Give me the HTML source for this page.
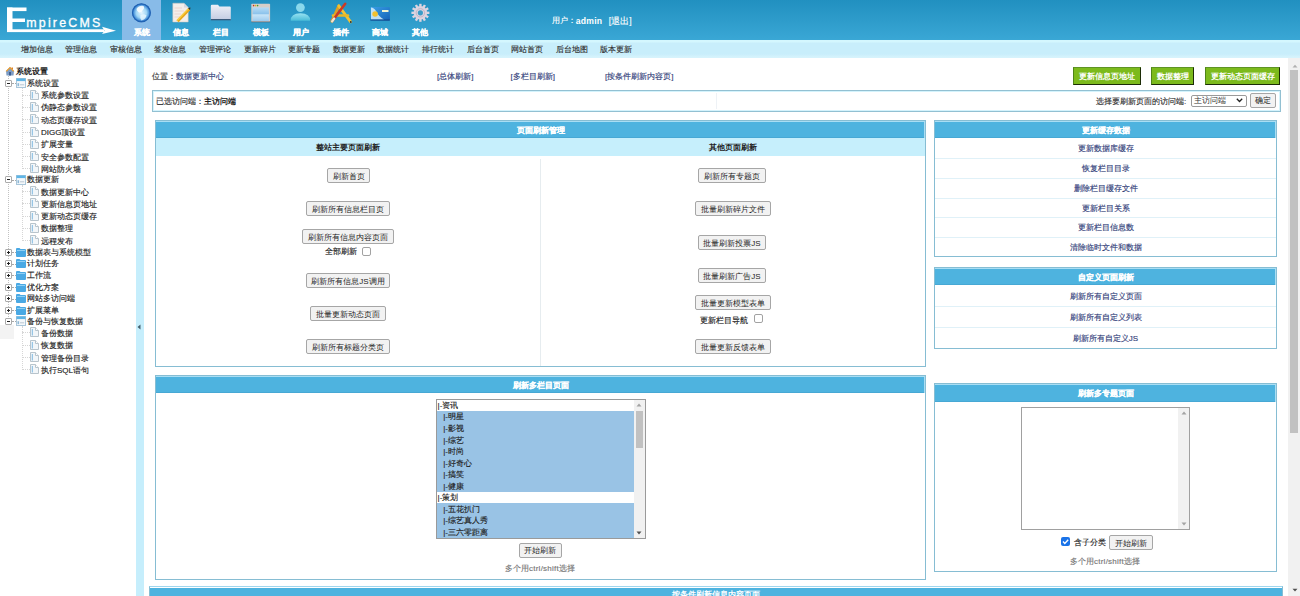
<!DOCTYPE html><html><head><meta charset="utf-8"><style>
*{margin:0;padding:0;box-sizing:border-box}
html,body{width:1300px;height:596px;overflow:hidden;background:#fff;font-family:"Liberation Sans",sans-serif;font-size:8px;color:#222}
.ab{position:absolute}
.t{position:absolute;white-space:nowrap;line-height:12px;-webkit-text-stroke:0.15px currentColor}
.c{text-align:center}
.t b,.b0{-webkit-text-stroke:0}
</style></head><body>

<div class="ab" style="left:0;top:0;width:1300px;height:40px;background:linear-gradient(#2190c0,#3aa7d5)"></div>
<svg class="ab" style="left:0;top:0" width="120" height="40" viewBox="0 0 120 40">
<g fill="#fff">
<rect x="7" y="7.5" width="5.5" height="24.5"/>
<rect x="7" y="7.5" width="19.5" height="3.6"/>
<rect x="7" y="18.5" width="18" height="3.5"/>
<rect x="7" y="29.3" width="97" height="2.8"/>
<path d="M102 26.8 L116 30.7 L102 34 L104.5 30.7 Z"/>
</g>
<text x="26.3" y="26.8" fill="#fff" stroke="#fff" stroke-width="0.3" font-family="Liberation Sans" font-size="12.4" letter-spacing="2.2">mpireCMS</text>
</svg>
<div class="ab" style="left:122px;top:0;width:39px;height:40px;background:#88bbe8"></div>
<svg class="ab" style="left:120px;top:0" width="320" height="26" viewBox="120 0 320 26">
<defs>
<radialGradient id="gl" cx="0.5" cy="0.5" r="0.55"><stop offset="0" stop-color="#e6f6ff"/><stop offset="0.5" stop-color="#9fd6f6"/><stop offset="0.8" stop-color="#3a86d4"/><stop offset="1" stop-color="#1a58a8"/></radialGradient>
<linearGradient id="fo" x1="0" y1="0" x2="0" y2="1"><stop offset="0" stop-color="#eef0f8"/><stop offset="1" stop-color="#c4cce2"/></linearGradient>
<linearGradient id="wi" x1="0" y1="0" x2="0" y2="1"><stop offset="0" stop-color="#b6dcf6"/><stop offset="0.45" stop-color="#8ec4ec"/><stop offset="0.55" stop-color="#c6e4f8"/><stop offset="1" stop-color="#9ccbee"/></linearGradient>
<linearGradient id="us" x1="0" y1="0" x2="0" y2="1"><stop offset="0" stop-color="#98e2f2"/><stop offset="1" stop-color="#48bcd8"/></linearGradient>
<linearGradient id="ca" x1="0" y1="0" x2="1" y2="1"><stop offset="0" stop-color="#3aa0e6"/><stop offset="1" stop-color="#1462b8"/></linearGradient>
</defs>
<circle cx="141.4" cy="12.8" r="9.4" fill="url(#gl)"/>
<circle cx="141.4" cy="12.8" r="8.9" fill="none" stroke="#1f5fb0" stroke-width="1.2" opacity="0.9"/>
<path d="M136.5 9 Q139 5.2 143.5 6 Q145 8 142.5 10.5 Q141.5 13 139 12.5 Q137 11.5 136.5 9Z" fill="#fff" opacity="0.85"/>
<path d="M140.5 15 Q144 13.5 146.5 15.5 Q145.5 19.5 141.5 20.5 Q139.5 18 140.5 15Z" fill="#e8f8ff" opacity="0.8"/>
<path d="M172.8 3.2 L184 3.2 L188.2 7.4 L188.2 22 L172.8 22Z" fill="#f3eeea" stroke="#c8c0b8" stroke-width="0.5"/>
<path d="M184 3.2 L184 7.4 L188.2 7.4Z" fill="#d8d8e0"/>
<g stroke="#e2b8b0" stroke-width="0.5"><line x1="174.5" y1="8" x2="182" y2="8"/><line x1="174.5" y1="11" x2="184" y2="11"/><line x1="174.5" y1="14" x2="181" y2="14"/><line x1="174.5" y1="17" x2="180" y2="17"/></g>
<line x1="177.5" y1="21.2" x2="189.2" y2="9.2" stroke="#e8a81c" stroke-width="3"/>
<line x1="177" y1="20.5" x2="188.5" y2="8.6" stroke="#fad24a" stroke-width="1.2"/>
<path d="M188 8 L190.5 7.5 L190 10Z" fill="#3a3024"/>
<path d="M210.8 6 Q210.8 4.8 212 4.8 L218 4.8 L219.4 6.4 L229.8 6.4 Q230.8 6.4 230.8 7.4 L230.8 20 L210.8 20Z" fill="url(#fo)"/>
<rect x="210.8" y="19" width="20" height="1.3" fill="#3a5a7c"/>
<rect x="251.3" y="3.8" width="18.8" height="18.3" fill="#d6cec8" rx="0.8"/>
<rect x="252.5" y="7.4" width="16.4" height="13.6" fill="url(#wi)"/>
<circle cx="253.6" cy="5.6" r="0.8" fill="#c03020"/><circle cx="255.6" cy="5.6" r="0.8" fill="#e0b020"/><circle cx="257.6" cy="5.6" r="0.8" fill="#40a030"/>
<rect x="251.3" y="21.5" width="18.8" height="0.8" fill="#5a6a7a"/>
<circle cx="300.4" cy="7.6" r="4.4" fill="#8ad8ec"/>
<path d="M290.7 20.8 Q290.7 13.2 300.4 13.2 Q310.2 13.2 310.2 20.8Z" fill="url(#us)"/>
<g stroke-linecap="round">
<line x1="331.8" y1="21.3" x2="338.8" y2="5.8" stroke="#e0a020" stroke-width="2.8"/>
<line x1="338.8" y1="5.8" x2="350.6" y2="21.8" stroke="#f2c232" stroke-width="2.8"/>
<line x1="333" y1="15.5" x2="348" y2="15.5" stroke="#e8b828" stroke-width="2.6"/>
<line x1="332.5" y1="20.8" x2="345.2" y2="3.8" stroke="#c83a28" stroke-width="2.6"/>
<line x1="332.2" y1="21.2" x2="334.2" y2="18.6" stroke="#f0e6d0" stroke-width="2.4"/>
<circle cx="350.8" cy="22" r="0.9" fill="#203040"/>
</g>
<rect x="370.4" y="7" width="19.5" height="13.5" rx="1" fill="url(#ca)"/>
<path d="M371 7.5 Q374 7.5 376 11 Q379 17 384 19.5 L371 19.5Z" fill="#d8eefa" opacity="0.85"/>
<circle cx="375.1" cy="14" r="2.8" fill="#f2c030"/>
<rect x="382" y="10" width="6.5" height="2" fill="#f0f4d0"/>
<rect x="370.4" y="19.6" width="19.5" height="0.9" fill="#0e3e80"/>
<g transform="translate(420.4 12.8)" fill="#dcd4e0">
<circle r="6.8"/>
<rect x="-1.2" y="-9" width="2.4" height="3"/>
<rect x="-1.2" y="-9" width="2.4" height="3" transform="rotate(30)"/>
<rect x="-1.2" y="-9" width="2.4" height="3" transform="rotate(60)"/>
<rect x="-1.2" y="-9" width="2.4" height="3" transform="rotate(90)"/>
<rect x="-1.2" y="-9" width="2.4" height="3" transform="rotate(120)"/>
<rect x="-1.2" y="-9" width="2.4" height="3" transform="rotate(150)"/>
<rect x="-1.2" y="-9" width="2.4" height="3" transform="rotate(180)"/>
<rect x="-1.2" y="-9" width="2.4" height="3" transform="rotate(210)"/>
<rect x="-1.2" y="-9" width="2.4" height="3" transform="rotate(240)"/>
<rect x="-1.2" y="-9" width="2.4" height="3" transform="rotate(270)"/>
<rect x="-1.2" y="-9" width="2.4" height="3" transform="rotate(300)"/>
<rect x="-1.2" y="-9" width="2.4" height="3" transform="rotate(330)"/>
<circle r="2.6" fill="#3a9cc8"/>
<circle r="4.2" fill="none" stroke="#b8aec0" stroke-width="0.8"/>
</g>
</svg>

<div class="t c" style="left:121.5px;top:27px;width:40px;line-height:12px;color:#fff;font-weight:bold;-webkit-text-stroke:0.2px #fff">系统</div>
<div class="t c" style="left:161.3px;top:27px;width:40px;line-height:12px;color:#fff;font-weight:bold;-webkit-text-stroke:0.2px #fff">信息</div>
<div class="t c" style="left:201.1px;top:27px;width:40px;line-height:12px;color:#fff;font-weight:bold;-webkit-text-stroke:0.2px #fff">栏目</div>
<div class="t c" style="left:240.9px;top:27px;width:40px;line-height:12px;color:#fff;font-weight:bold;-webkit-text-stroke:0.2px #fff">模板</div>
<div class="t c" style="left:280.7px;top:27px;width:40px;line-height:12px;color:#fff;font-weight:bold;-webkit-text-stroke:0.2px #fff">用户</div>
<div class="t c" style="left:320.5px;top:27px;width:40px;line-height:12px;color:#fff;font-weight:bold;-webkit-text-stroke:0.2px #fff">插件</div>
<div class="t c" style="left:360.3px;top:27px;width:40px;line-height:12px;color:#fff;font-weight:bold;-webkit-text-stroke:0.2px #fff">商城</div>
<div class="t c" style="left:400.1px;top:27px;width:40px;line-height:12px;color:#fff;font-weight:bold;-webkit-text-stroke:0.2px #fff">其他</div>
<div class="t" style="left:551.5px;top:14.5px;color:#fff">用户：</div>
<div class="t b0" style="left:575.8px;top:14.5px;color:#fff;font-weight:bold;font-size:8.6px;letter-spacing:0.25px">admin</div>
<div class="t" style="left:608.8px;top:14.5px;color:#fff;font-size:8.5px">[退出]</div>
<div class="ab" style="left:0;top:40px;width:1300px;height:18px;background:linear-gradient(#d4f7fe 0,#d4f7fe 2px,#c8eefb 3px,#c8eefb 14px,#d6f3fc 17px)"></div>
<div class="t" style="left:20.5px;top:44px;color:#333">增加信息</div>
<div class="t" style="left:65.1px;top:44px;color:#333">管理信息</div>
<div class="t" style="left:109.7px;top:44px;color:#333">审核信息</div>
<div class="t" style="left:154.3px;top:44px;color:#333">签发信息</div>
<div class="t" style="left:198.9px;top:44px;color:#333">管理评论</div>
<div class="t" style="left:243.5px;top:44px;color:#333">更新碎片</div>
<div class="t" style="left:288.1px;top:44px;color:#333">更新专题</div>
<div class="t" style="left:332.7px;top:44px;color:#333">数据更新</div>
<div class="t" style="left:377.3px;top:44px;color:#333">数据统计</div>
<div class="t" style="left:421.9px;top:44px;color:#333">排行统计</div>
<div class="t" style="left:466.5px;top:44px;color:#333">后台首页</div>
<div class="t" style="left:511.1px;top:44px;color:#333">网站首页</div>
<div class="t" style="left:555.7px;top:44px;color:#333">后台地图</div>
<div class="t" style="left:600.3px;top:44px;color:#333">版本更新</div>
<svg class="ab" style="left:5px;top:66px" width="10" height="10" viewBox="0 0 10 10"><path d="M1 5 L5 1 L9 5 L8.5 9.5 L1.5 9.5 Z" fill="#7d9cc4"/><path d="M0.5 5.2 L5 0.8 L9.5 5.2 L8 5.5 L5 2.6 L2 5.5 Z" fill="#f0a030"/><path d="M6.5 1.5 L8 1.5 L8 3.5 L6.5 2.5Z" fill="#e08020"/><rect x="4" y="6" width="2" height="3.5" fill="#3b5f93"/></svg>
<div class="t b0" style="left:16.3px;top:65.5px;font-weight:bold;color:#222">系统设置</div>
<div class="ab" style="left:8px;top:76px;height:245.1px;border-left:1px dotted #c2c2c2"></div>
<div class="ab" style="left:12px;top:83.2px;width:4px;border-top:1px dotted #a8a8a8"></div>
<div class="ab" style="left:5px;top:80px;width:7px;height:7px;border:1px solid #ababab;background:#fff;border-radius:1px"></div><div class="ab" style="left:7px;top:83px;width:3px;height:1px;background:#222"></div>
<svg class="ab" style="left:15.8px;top:78.2px" width="10" height="10" viewBox="0 0 10 10"><rect x="0.5" y="0.5" width="9" height="9" fill="#f4f8fb" stroke="#a9c6da" stroke-width="1"/><rect x="0.5" y="0.5" width="9" height="2.6" fill="#5fb5e6"/><rect x="1.5" y="5.2" width="1.6" height="3" fill="#8db7d6"/><rect x="4" y="6.3" width="4.2" height="1" fill="#b9c7d2"/></svg>
<div class="t" style="left:27.3px;top:77.7px;color:#222">系统设置</div>
<div class="ab" style="left:22px;top:94.5px;width:8px;border-top:1px dotted #d6d6d6"></div>
<svg class="ab" style="left:30.2px;top:89.5px" width="9" height="10" viewBox="0 0 9 10"><path d="M0.5 0.5 L5.5 0.5 L8.5 3.5 L8.5 9.5 L0.5 9.5Z" fill="#f2f6f9" stroke="#b8c4cc" stroke-width="1"/><path d="M5.5 0.5 L5.5 3.5 L8.5 3.5" fill="#fff" stroke="#b8c4cc" stroke-width="1"/><rect x="1.8" y="2" width="1" height="6.5" fill="#7fb8e0"/></svg>
<div class="t" style="left:41px;top:90.0px;color:#222">系统参数设置</div>
<div class="ab" style="left:22px;top:106.8px;width:8px;border-top:1px dotted #d6d6d6"></div>
<svg class="ab" style="left:30.2px;top:101.8px" width="9" height="10" viewBox="0 0 9 10"><path d="M0.5 0.5 L5.5 0.5 L8.5 3.5 L8.5 9.5 L0.5 9.5Z" fill="#f2f6f9" stroke="#b8c4cc" stroke-width="1"/><path d="M5.5 0.5 L5.5 3.5 L8.5 3.5" fill="#fff" stroke="#b8c4cc" stroke-width="1"/><rect x="1.8" y="2" width="1" height="6.5" fill="#7fb8e0"/></svg>
<div class="t" style="left:41px;top:102.3px;color:#222">伪静态参数设置</div>
<div class="ab" style="left:22px;top:119.2px;width:8px;border-top:1px dotted #d6d6d6"></div>
<svg class="ab" style="left:30.2px;top:114.2px" width="9" height="10" viewBox="0 0 9 10"><path d="M0.5 0.5 L5.5 0.5 L8.5 3.5 L8.5 9.5 L0.5 9.5Z" fill="#f2f6f9" stroke="#b8c4cc" stroke-width="1"/><path d="M5.5 0.5 L5.5 3.5 L8.5 3.5" fill="#fff" stroke="#b8c4cc" stroke-width="1"/><rect x="1.8" y="2" width="1" height="6.5" fill="#7fb8e0"/></svg>
<div class="t" style="left:41px;top:114.7px;color:#222">动态页缓存设置</div>
<div class="ab" style="left:22px;top:131.5px;width:8px;border-top:1px dotted #d6d6d6"></div>
<svg class="ab" style="left:30.2px;top:126.5px" width="9" height="10" viewBox="0 0 9 10"><path d="M0.5 0.5 L5.5 0.5 L8.5 3.5 L8.5 9.5 L0.5 9.5Z" fill="#f2f6f9" stroke="#b8c4cc" stroke-width="1"/><path d="M5.5 0.5 L5.5 3.5 L8.5 3.5" fill="#fff" stroke="#b8c4cc" stroke-width="1"/><rect x="1.8" y="2" width="1" height="6.5" fill="#7fb8e0"/></svg>
<div class="t" style="left:41px;top:127.0px;color:#222">DIGG顶设置</div>
<div class="ab" style="left:22px;top:143.8px;width:8px;border-top:1px dotted #d6d6d6"></div>
<svg class="ab" style="left:30.2px;top:138.8px" width="9" height="10" viewBox="0 0 9 10"><path d="M0.5 0.5 L5.5 0.5 L8.5 3.5 L8.5 9.5 L0.5 9.5Z" fill="#f2f6f9" stroke="#b8c4cc" stroke-width="1"/><path d="M5.5 0.5 L5.5 3.5 L8.5 3.5" fill="#fff" stroke="#b8c4cc" stroke-width="1"/><rect x="1.8" y="2" width="1" height="6.5" fill="#7fb8e0"/></svg>
<div class="t" style="left:41px;top:139.3px;color:#222">扩展变量</div>
<div class="ab" style="left:22px;top:156.1px;width:8px;border-top:1px dotted #d6d6d6"></div>
<svg class="ab" style="left:30.2px;top:151.1px" width="9" height="10" viewBox="0 0 9 10"><path d="M0.5 0.5 L5.5 0.5 L8.5 3.5 L8.5 9.5 L0.5 9.5Z" fill="#f2f6f9" stroke="#b8c4cc" stroke-width="1"/><path d="M5.5 0.5 L5.5 3.5 L8.5 3.5" fill="#fff" stroke="#b8c4cc" stroke-width="1"/><rect x="1.8" y="2" width="1" height="6.5" fill="#7fb8e0"/></svg>
<div class="t" style="left:41px;top:151.6px;color:#222">安全参数配置</div>
<div class="ab" style="left:22px;top:168.4px;width:8px;border-top:1px dotted #d6d6d6"></div>
<div class="ab" style="left:22px;top:88.2px;height:81.2px;border-left:1px dotted #d6d6d6"></div>
<svg class="ab" style="left:30.2px;top:163.4px" width="9" height="10" viewBox="0 0 9 10"><path d="M0.5 0.5 L5.5 0.5 L8.5 3.5 L8.5 9.5 L0.5 9.5Z" fill="#f2f6f9" stroke="#b8c4cc" stroke-width="1"/><path d="M5.5 0.5 L5.5 3.5 L8.5 3.5" fill="#fff" stroke="#b8c4cc" stroke-width="1"/><rect x="1.8" y="2" width="1" height="6.5" fill="#7fb8e0"/></svg>
<div class="t" style="left:41px;top:163.9px;color:#222">网站防火墙</div>
<div class="ab" style="left:12px;top:179.7px;width:4px;border-top:1px dotted #a8a8a8"></div>
<div class="ab" style="left:5px;top:176px;width:7px;height:7px;border:1px solid #ababab;background:#fff;border-radius:1px"></div><div class="ab" style="left:7px;top:179px;width:3px;height:1px;background:#222"></div>
<svg class="ab" style="left:15.8px;top:174.7px" width="10" height="10" viewBox="0 0 10 10"><rect x="0.5" y="0.5" width="9" height="9" fill="#f4f8fb" stroke="#a9c6da" stroke-width="1"/><rect x="0.5" y="0.5" width="9" height="2.6" fill="#5fb5e6"/><rect x="1.5" y="5.2" width="1.6" height="3" fill="#8db7d6"/><rect x="4" y="6.3" width="4.2" height="1" fill="#b9c7d2"/></svg>
<div class="t" style="left:27.3px;top:174.2px;color:#222">数据更新</div>
<div class="ab" style="left:22px;top:191.0px;width:8px;border-top:1px dotted #d6d6d6"></div>
<svg class="ab" style="left:30.2px;top:186.0px" width="9" height="10" viewBox="0 0 9 10"><path d="M0.5 0.5 L5.5 0.5 L8.5 3.5 L8.5 9.5 L0.5 9.5Z" fill="#f2f6f9" stroke="#b8c4cc" stroke-width="1"/><path d="M5.5 0.5 L5.5 3.5 L8.5 3.5" fill="#fff" stroke="#b8c4cc" stroke-width="1"/><rect x="1.8" y="2" width="1" height="6.5" fill="#7fb8e0"/></svg>
<div class="t" style="left:41px;top:186.5px;color:#222">数据更新中心</div>
<div class="ab" style="left:22px;top:203.3px;width:8px;border-top:1px dotted #d6d6d6"></div>
<svg class="ab" style="left:30.2px;top:198.3px" width="9" height="10" viewBox="0 0 9 10"><path d="M0.5 0.5 L5.5 0.5 L8.5 3.5 L8.5 9.5 L0.5 9.5Z" fill="#f2f6f9" stroke="#b8c4cc" stroke-width="1"/><path d="M5.5 0.5 L5.5 3.5 L8.5 3.5" fill="#fff" stroke="#b8c4cc" stroke-width="1"/><rect x="1.8" y="2" width="1" height="6.5" fill="#7fb8e0"/></svg>
<div class="t" style="left:41px;top:198.8px;color:#222">更新信息页地址</div>
<div class="ab" style="left:22px;top:215.6px;width:8px;border-top:1px dotted #d6d6d6"></div>
<svg class="ab" style="left:30.2px;top:210.6px" width="9" height="10" viewBox="0 0 9 10"><path d="M0.5 0.5 L5.5 0.5 L8.5 3.5 L8.5 9.5 L0.5 9.5Z" fill="#f2f6f9" stroke="#b8c4cc" stroke-width="1"/><path d="M5.5 0.5 L5.5 3.5 L8.5 3.5" fill="#fff" stroke="#b8c4cc" stroke-width="1"/><rect x="1.8" y="2" width="1" height="6.5" fill="#7fb8e0"/></svg>
<div class="t" style="left:41px;top:211.1px;color:#222">更新动态页缓存</div>
<div class="ab" style="left:22px;top:227.9px;width:8px;border-top:1px dotted #d6d6d6"></div>
<svg class="ab" style="left:30.2px;top:222.9px" width="9" height="10" viewBox="0 0 9 10"><path d="M0.5 0.5 L5.5 0.5 L8.5 3.5 L8.5 9.5 L0.5 9.5Z" fill="#f2f6f9" stroke="#b8c4cc" stroke-width="1"/><path d="M5.5 0.5 L5.5 3.5 L8.5 3.5" fill="#fff" stroke="#b8c4cc" stroke-width="1"/><rect x="1.8" y="2" width="1" height="6.5" fill="#7fb8e0"/></svg>
<div class="t" style="left:41px;top:223.4px;color:#222">数据整理</div>
<div class="ab" style="left:22px;top:240.2px;width:8px;border-top:1px dotted #d6d6d6"></div>
<div class="ab" style="left:22px;top:184.7px;height:56.6px;border-left:1px dotted #d6d6d6"></div>
<svg class="ab" style="left:30.2px;top:235.2px" width="9" height="10" viewBox="0 0 9 10"><path d="M0.5 0.5 L5.5 0.5 L8.5 3.5 L8.5 9.5 L0.5 9.5Z" fill="#f2f6f9" stroke="#b8c4cc" stroke-width="1"/><path d="M5.5 0.5 L5.5 3.5 L8.5 3.5" fill="#fff" stroke="#b8c4cc" stroke-width="1"/><rect x="1.8" y="2" width="1" height="6.5" fill="#7fb8e0"/></svg>
<div class="t" style="left:41px;top:235.8px;color:#222">远程发布</div>
<div class="ab" style="left:12px;top:252.2px;width:4px;border-top:1px dotted #a8a8a8"></div>
<div class="ab" style="left:5px;top:249px;width:7px;height:7px;border:1px solid #ababab;background:#fff;border-radius:1px"></div><div class="ab" style="left:7px;top:252px;width:3px;height:1px;background:#222"></div><div class="ab" style="left:8px;top:251px;width:1px;height:3px;background:#222"></div>
<svg class="ab" style="left:15.6px;top:247.7px" width="10" height="9" viewBox="0 0 10 9"><path d="M0 1 Q0 0 1 0 L3.5 0 L4.5 1 L9 1 Q10 1 10 2 L10 8 Q10 9 9 9 L1 9 Q0 9 0 8Z" fill="#4aa9e4"/><rect x="1" y="2" width="8" height="1" fill="#8fd0f5"/></svg>
<div class="t" style="left:27.3px;top:246.7px;color:#222">数据表与系统模型</div>
<div class="ab" style="left:12px;top:263.8px;width:4px;border-top:1px dotted #a8a8a8"></div>
<div class="ab" style="left:5px;top:260px;width:7px;height:7px;border:1px solid #ababab;background:#fff;border-radius:1px"></div><div class="ab" style="left:7px;top:263px;width:3px;height:1px;background:#222"></div><div class="ab" style="left:8px;top:262px;width:1px;height:3px;background:#222"></div>
<svg class="ab" style="left:15.6px;top:259.3px" width="10" height="9" viewBox="0 0 10 9"><path d="M0 1 Q0 0 1 0 L3.5 0 L4.5 1 L9 1 Q10 1 10 2 L10 8 Q10 9 9 9 L1 9 Q0 9 0 8Z" fill="#4aa9e4"/><rect x="1" y="2" width="8" height="1" fill="#8fd0f5"/></svg>
<div class="t" style="left:27.3px;top:258.3px;color:#222">计划任务</div>
<div class="ab" style="left:12px;top:275.4px;width:4px;border-top:1px dotted #a8a8a8"></div>
<div class="ab" style="left:5px;top:272px;width:7px;height:7px;border:1px solid #ababab;background:#fff;border-radius:1px"></div><div class="ab" style="left:7px;top:275px;width:3px;height:1px;background:#222"></div><div class="ab" style="left:8px;top:274px;width:1px;height:3px;background:#222"></div>
<svg class="ab" style="left:15.6px;top:270.9px" width="10" height="9" viewBox="0 0 10 9"><path d="M0 1 Q0 0 1 0 L3.5 0 L4.5 1 L9 1 Q10 1 10 2 L10 8 Q10 9 9 9 L1 9 Q0 9 0 8Z" fill="#4aa9e4"/><rect x="1" y="2" width="8" height="1" fill="#8fd0f5"/></svg>
<div class="t" style="left:27.3px;top:269.9px;color:#222">工作流</div>
<div class="ab" style="left:12px;top:287.0px;width:4px;border-top:1px dotted #a8a8a8"></div>
<div class="ab" style="left:5px;top:284px;width:7px;height:7px;border:1px solid #ababab;background:#fff;border-radius:1px"></div><div class="ab" style="left:7px;top:287px;width:3px;height:1px;background:#222"></div><div class="ab" style="left:8px;top:286px;width:1px;height:3px;background:#222"></div>
<svg class="ab" style="left:15.6px;top:282.5px" width="10" height="9" viewBox="0 0 10 9"><path d="M0 1 Q0 0 1 0 L3.5 0 L4.5 1 L9 1 Q10 1 10 2 L10 8 Q10 9 9 9 L1 9 Q0 9 0 8Z" fill="#4aa9e4"/><rect x="1" y="2" width="8" height="1" fill="#8fd0f5"/></svg>
<div class="t" style="left:27.3px;top:281.5px;color:#222">优化方案</div>
<div class="ab" style="left:12px;top:298.6px;width:4px;border-top:1px dotted #a8a8a8"></div>
<div class="ab" style="left:5px;top:295px;width:7px;height:7px;border:1px solid #ababab;background:#fff;border-radius:1px"></div><div class="ab" style="left:7px;top:298px;width:3px;height:1px;background:#222"></div><div class="ab" style="left:8px;top:297px;width:1px;height:3px;background:#222"></div>
<svg class="ab" style="left:15.6px;top:294.1px" width="10" height="9" viewBox="0 0 10 9"><path d="M0 1 Q0 0 1 0 L3.5 0 L4.5 1 L9 1 Q10 1 10 2 L10 8 Q10 9 9 9 L1 9 Q0 9 0 8Z" fill="#4aa9e4"/><rect x="1" y="2" width="8" height="1" fill="#8fd0f5"/></svg>
<div class="t" style="left:27.3px;top:293.1px;color:#222">网站多访问端</div>
<div class="ab" style="left:12px;top:310.1px;width:4px;border-top:1px dotted #a8a8a8"></div>
<div class="ab" style="left:5px;top:307px;width:7px;height:7px;border:1px solid #ababab;background:#fff;border-radius:1px"></div><div class="ab" style="left:7px;top:310px;width:3px;height:1px;background:#222"></div><div class="ab" style="left:8px;top:309px;width:1px;height:3px;background:#222"></div>
<svg class="ab" style="left:15.6px;top:305.6px" width="10" height="9" viewBox="0 0 10 9"><path d="M0 1 Q0 0 1 0 L3.5 0 L4.5 1 L9 1 Q10 1 10 2 L10 8 Q10 9 9 9 L1 9 Q0 9 0 8Z" fill="#4aa9e4"/><rect x="1" y="2" width="8" height="1" fill="#8fd0f5"/></svg>
<div class="t" style="left:27.3px;top:304.6px;color:#222">扩展菜单</div>
<div class="ab" style="left:12px;top:321.1px;width:4px;border-top:1px dotted #a8a8a8"></div>
<div class="ab" style="left:5px;top:318px;width:7px;height:7px;border:1px solid #ababab;background:#fff;border-radius:1px"></div><div class="ab" style="left:7px;top:321px;width:3px;height:1px;background:#222"></div>
<svg class="ab" style="left:15.8px;top:316.1px" width="10" height="10" viewBox="0 0 10 10"><rect x="0.5" y="0.5" width="9" height="9" fill="#f4f8fb" stroke="#a9c6da" stroke-width="1"/><rect x="0.5" y="0.5" width="9" height="2.6" fill="#5fb5e6"/><rect x="1.5" y="5.2" width="1.6" height="3" fill="#8db7d6"/><rect x="4" y="6.3" width="4.2" height="1" fill="#b9c7d2"/></svg>
<div class="t" style="left:27.3px;top:315.6px;color:#222">备份与恢复数据</div>
<div class="ab" style="left:22px;top:332.4px;width:8px;border-top:1px dotted #d6d6d6"></div>
<svg class="ab" style="left:30.2px;top:327.4px" width="9" height="10" viewBox="0 0 9 10"><path d="M0.5 0.5 L5.5 0.5 L8.5 3.5 L8.5 9.5 L0.5 9.5Z" fill="#f2f6f9" stroke="#b8c4cc" stroke-width="1"/><path d="M5.5 0.5 L5.5 3.5 L8.5 3.5" fill="#fff" stroke="#b8c4cc" stroke-width="1"/><rect x="1.8" y="2" width="1" height="6.5" fill="#7fb8e0"/></svg>
<div class="t" style="left:41px;top:327.9px;color:#222">备份数据</div>
<div class="ab" style="left:22px;top:344.7px;width:8px;border-top:1px dotted #d6d6d6"></div>
<svg class="ab" style="left:30.2px;top:339.7px" width="9" height="10" viewBox="0 0 9 10"><path d="M0.5 0.5 L5.5 0.5 L8.5 3.5 L8.5 9.5 L0.5 9.5Z" fill="#f2f6f9" stroke="#b8c4cc" stroke-width="1"/><path d="M5.5 0.5 L5.5 3.5 L8.5 3.5" fill="#fff" stroke="#b8c4cc" stroke-width="1"/><rect x="1.8" y="2" width="1" height="6.5" fill="#7fb8e0"/></svg>
<div class="t" style="left:41px;top:340.2px;color:#222">恢复数据</div>
<div class="ab" style="left:22px;top:357.0px;width:8px;border-top:1px dotted #d6d6d6"></div>
<svg class="ab" style="left:30.2px;top:352.0px" width="9" height="10" viewBox="0 0 9 10"><path d="M0.5 0.5 L5.5 0.5 L8.5 3.5 L8.5 9.5 L0.5 9.5Z" fill="#f2f6f9" stroke="#b8c4cc" stroke-width="1"/><path d="M5.5 0.5 L5.5 3.5 L8.5 3.5" fill="#fff" stroke="#b8c4cc" stroke-width="1"/><rect x="1.8" y="2" width="1" height="6.5" fill="#7fb8e0"/></svg>
<div class="t" style="left:41px;top:352.5px;color:#222">管理备份目录</div>
<div class="ab" style="left:22px;top:369.3px;width:8px;border-top:1px dotted #d6d6d6"></div>
<div class="ab" style="left:22px;top:326.1px;height:44.2px;border-left:1px dotted #d6d6d6"></div>
<svg class="ab" style="left:30.2px;top:364.3px" width="9" height="10" viewBox="0 0 9 10"><path d="M0.5 0.5 L5.5 0.5 L8.5 3.5 L8.5 9.5 L0.5 9.5Z" fill="#f2f6f9" stroke="#b8c4cc" stroke-width="1"/><path d="M5.5 0.5 L5.5 3.5 L8.5 3.5" fill="#fff" stroke="#b8c4cc" stroke-width="1"/><rect x="1.8" y="2" width="1" height="6.5" fill="#7fb8e0"/></svg>
<div class="t" style="left:41px;top:364.8px;color:#222">执行SQL语句</div>
<div class="ab" style="left:136px;top:58px;width:8px;height:538px;background:#c6eefc"></div>
<div class="ab" style="left:0;top:325px;width:14px;height:14px;background:#f3f3f3"></div>
<svg class="ab" style="left:137px;top:324px" width="4" height="6"><path d="M3.5 0.5 L0.5 3 L3.5 5.5Z" fill="#44606e"/></svg>
<div class="t" style="left:152px;top:70.8px;color:#333">位置：<span style="color:#33417a">数据更新中心</span></div>
<div class="t" style="left:437px;top:70.8px;color:#33417a">[总体刷新]</div>
<div class="t" style="left:510.5px;top:70.8px;color:#33417a">[多栏目刷新]</div>
<div class="t" style="left:605px;top:70.8px;color:#33417a">[按条件刷新内容页]</div>
<div class="ab c" style="left:1073.4px;top:67px;width:67.59999999999991px;height:17.6px;background:#7cba1c;border:1px solid #3f6a10;border-top-color:#5e9424;border-left-color:#4f8418;border-right-color:#1c2c06;border-bottom-color:#1c2c06;color:#fff;font-weight:bold;line-height:15.6px;padding-top:1px">更新信息页地址</div>
<div class="ab c" style="left:1151.2px;top:67px;width:42.799999999999955px;height:17.6px;background:#7cba1c;border:1px solid #3f6a10;border-top-color:#5e9424;border-left-color:#4f8418;border-right-color:#1c2c06;border-bottom-color:#1c2c06;color:#fff;font-weight:bold;line-height:15.6px;padding-top:1px">数据整理</div>
<div class="ab c" style="left:1205px;top:67px;width:75px;height:17.6px;background:#7cba1c;border:1px solid #3f6a10;border-top-color:#5e9424;border-left-color:#4f8418;border-right-color:#1c2c06;border-bottom-color:#1c2c06;color:#fff;font-weight:bold;line-height:15.6px;padding-top:1px">更新动态页面缓存</div>
<div class="ab" style="left:152px;top:90.3px;width:1128.5px;height:21.5px;border:1px solid #92c0d2;box-shadow:inset 0 0 0 1px #d4f3fc;background:#fff"></div>
<div class="ab" style="left:716px;top:92.5px;width:1px;height:16px;background:#eef2f6"></div>
<div class="t" style="left:155.5px;top:95.5px;color:#333">已选访问端：<b style="color:#222">主访问端</b></div>
<div class="t" style="left:1096px;top:95.8px;color:#333">选择要刷新页面的访问端:</div>
<div class="ab" style="left:1190.5px;top:94.5px;width:56px;height:12.5px;border:1px solid #9a9a9a;border-radius:2px;background:#fff"></div>
<div class="t b0" style="left:1194px;top:95.3px;color:#333">主访问端</div>
<svg class="ab" style="left:1236px;top:98px" width="7" height="5"><path d="M0.8 0.8 L3.5 3.5 L6.2 0.8" fill="none" stroke="#222" stroke-width="1.3"/></svg>
<div class="ab c" style="left:1250px;top:93px;width:26.2px;height:14.6px;background:#f2f2f2;border:1px solid #a6a6a6;border-radius:2px;color:#222;line-height:12.6px;padding-top:1px">确定</div>
<div class="ab" style="left:155px;top:120px;width:771px;height:247px;border:1px solid #86bdd3;background:#fff"></div><div class="ab" style="left:156px;top:121px;width:769px;height:17px;background:#a9def4"></div><div class="ab" style="left:156px;top:122px;width:768px;height:16px;background:#4eb3df;border-bottom:1px solid #47a8d4"></div><div class="t c" style="left:155px;top:124.7px;width:771px;color:#fff;font-weight:bold;-webkit-text-stroke:0.15px #fff">页面刷新管理</div>
<div class="ab" style="left:156px;top:138px;width:769px;height:18px;background:#c6effc"></div>
<div class="t c b0" style="left:156px;top:142.2px;width:384px;font-weight:bold;color:#222">整站主要页面刷新</div>
<div class="t c b0" style="left:541px;top:142.2px;width:384px;font-weight:bold;color:#222">其他页面刷新</div>
<div class="ab" style="left:540px;top:159px;width:1px;height:207px;background:#e6ecef"></div>
<div class="ab c" style="left:327px;top:168px;width:43px;height:15px;background:#f2f2f2;border:1px solid #a6a6a6;border-radius:2px;color:#222;line-height:13px;padding-top:1px">刷新首页</div>
<div class="ab c" style="left:306px;top:201px;width:84px;height:15px;background:#f2f2f2;border:1px solid #a6a6a6;border-radius:2px;color:#222;line-height:13px;padding-top:1px">刷新所有信息栏目页</div>
<div class="ab c" style="left:302px;top:229px;width:92px;height:15px;background:#f2f2f2;border:1px solid #a6a6a6;border-radius:2px;color:#222;line-height:13px;padding-top:1px">刷新所有信息内容页面</div>
<div class="ab c" style="left:306px;top:273px;width:84px;height:15px;background:#f2f2f2;border:1px solid #a6a6a6;border-radius:2px;color:#222;line-height:13px;padding-top:1px">刷新所有信息JS调用</div>
<div class="ab c" style="left:310px;top:306px;width:76px;height:15px;background:#f2f2f2;border:1px solid #a6a6a6;border-radius:2px;color:#222;line-height:13px;padding-top:1px">批量更新动态页面</div>
<div class="ab c" style="left:306px;top:339px;width:84px;height:15px;background:#f2f2f2;border:1px solid #a6a6a6;border-radius:2px;color:#222;line-height:13px;padding-top:1px">刷新所有标题分类页</div>
<div class="ab c" style="left:698px;top:168px;width:68px;height:15px;background:#f2f2f2;border:1px solid #a6a6a6;border-radius:2px;color:#222;line-height:13px;padding-top:1px">刷新所有专题页</div>
<div class="ab c" style="left:695px;top:201px;width:76px;height:15px;background:#f2f2f2;border:1px solid #a6a6a6;border-radius:2px;color:#222;line-height:13px;padding-top:1px">批量刷新碎片文件</div>
<div class="ab c" style="left:698px;top:235px;width:68px;height:15px;background:#f2f2f2;border:1px solid #a6a6a6;border-radius:2px;color:#222;line-height:13px;padding-top:1px">批量刷新投票JS</div>
<div class="ab c" style="left:698px;top:268px;width:68px;height:15px;background:#f2f2f2;border:1px solid #a6a6a6;border-radius:2px;color:#222;line-height:13px;padding-top:1px">批量刷新广告JS</div>
<div class="ab c" style="left:695px;top:295px;width:76px;height:15px;background:#f2f2f2;border:1px solid #a6a6a6;border-radius:2px;color:#222;line-height:13px;padding-top:1px">批量更新模型表单</div>
<div class="ab c" style="left:695px;top:339px;width:76px;height:15px;background:#f2f2f2;border:1px solid #a6a6a6;border-radius:2px;color:#222;line-height:13px;padding-top:1px">批量更新反馈表单</div>
<div class="t" style="left:324.8px;top:246.3px;color:#222">全部刷新</div>
<div class="ab" style="left:361.5px;top:246.5px;width:9px;height:9px;border:1px solid #a2a2a2;border-radius:2px;background:#fff"></div>
<div class="t" style="left:700px;top:314.8px;color:#222">更新栏目导航</div>
<div class="ab" style="left:754px;top:314.3px;width:9px;height:9px;border:1px solid #a2a2a2;border-radius:2px;background:#fff"></div>
<div class="ab" style="left:934px;top:120px;width:343px;height:137px;border:1px solid #86bdd3;background:#fff"></div><div class="ab" style="left:935px;top:121px;width:341px;height:17px;background:#a9def4"></div><div class="ab" style="left:935px;top:122px;width:340px;height:16px;background:#4eb3df;border-bottom:1px solid #47a8d4"></div><div class="t c" style="left:934px;top:124.7px;width:343px;color:#fff;font-weight:bold;-webkit-text-stroke:0.15px #fff">更新缓存数据</div>
<div class="t c" style="left:934px;top:143.2px;width:343px;color:#33417a">更新数据库缓存</div>
<div class="ab" style="left:935px;top:158.3px;width:341px;height:1px;background:#e0f1f8"></div>
<div class="t c" style="left:934px;top:163.4px;width:343px;color:#33417a">恢复栏目目录</div>
<div class="ab" style="left:935px;top:178.4px;width:341px;height:1px;background:#e0f1f8"></div>
<div class="t c" style="left:934px;top:183.2px;width:343px;color:#33417a">删除栏目缓存文件</div>
<div class="ab" style="left:935px;top:198.0px;width:341px;height:1px;background:#e0f1f8"></div>
<div class="t c" style="left:934px;top:202.7px;width:343px;color:#33417a">更新栏目关系</div>
<div class="ab" style="left:935px;top:217.3px;width:341px;height:1px;background:#e0f1f8"></div>
<div class="t c" style="left:934px;top:222.1px;width:343px;color:#33417a">更新栏目信息数</div>
<div class="ab" style="left:935px;top:236.9px;width:341px;height:1px;background:#e0f1f8"></div>
<div class="t c" style="left:934px;top:241.7px;width:343px;color:#33417a">清除临时文件和数据</div>
<div class="ab" style="left:934px;top:267px;width:343px;height:82px;border:1px solid #86bdd3;background:#fff"></div><div class="ab" style="left:935px;top:268px;width:341px;height:17px;background:#a9def4"></div><div class="ab" style="left:935px;top:269px;width:340px;height:16px;background:#4eb3df;border-bottom:1px solid #47a8d4"></div><div class="t c" style="left:934px;top:271.7px;width:343px;color:#fff;font-weight:bold;-webkit-text-stroke:0.15px #fff">自定义页面刷新</div>
<div class="t c" style="left:934px;top:290.8px;width:343px;color:#33417a">刷新所有自定义页面</div>
<div class="ab" style="left:935px;top:306.3px;width:341px;height:1px;background:#e0f1f8"></div>
<div class="t c" style="left:934px;top:311.7px;width:343px;color:#33417a">刷新所有自定义列表</div>
<div class="ab" style="left:935px;top:327.1px;width:341px;height:1px;background:#e0f1f8"></div>
<div class="t c" style="left:934px;top:332.9px;width:343px;color:#33417a">刷新所有自定义JS</div>
<div class="ab" style="left:155px;top:375px;width:771px;height:205px;border:1px solid #86bdd3;background:#fff"></div><div class="ab" style="left:156px;top:376px;width:769px;height:17px;background:#a9def4"></div><div class="ab" style="left:156px;top:377px;width:768px;height:16px;background:#4eb3df;border-bottom:1px solid #47a8d4"></div><div class="t c" style="left:155px;top:379.7px;width:771px;color:#fff;font-weight:bold;-webkit-text-stroke:0.15px #fff">刷新多栏目页面</div>
<div class="ab" style="left:435.5px;top:399.2px;width:210px;height:139.5px;border:1px solid #9a9a9a;background:#fff;overflow:hidden"></div>
<div class="t" style="left:437.6px;top:399.90px;line-height:11.55px;color:#222">|-资讯</div>
<div class="ab" style="left:436.5px;top:411.05px;width:197.5px;height:11.60px;background:#99c3e5"></div>
<div class="t" style="left:443.2px;top:411.45px;line-height:11.55px;color:#222">|-明星</div>
<div class="ab" style="left:436.5px;top:422.60px;width:197.5px;height:11.60px;background:#99c3e5"></div>
<div class="t" style="left:443.2px;top:423.00px;line-height:11.55px;color:#222">|-影视</div>
<div class="ab" style="left:436.5px;top:434.15px;width:197.5px;height:11.60px;background:#99c3e5"></div>
<div class="t" style="left:443.2px;top:434.55px;line-height:11.55px;color:#222">|-综艺</div>
<div class="ab" style="left:436.5px;top:445.70px;width:197.5px;height:11.60px;background:#99c3e5"></div>
<div class="t" style="left:443.2px;top:446.10px;line-height:11.55px;color:#222">|-时尚</div>
<div class="ab" style="left:436.5px;top:457.25px;width:197.5px;height:11.60px;background:#99c3e5"></div>
<div class="t" style="left:443.2px;top:457.65px;line-height:11.55px;color:#222">|-好奇心</div>
<div class="ab" style="left:436.5px;top:468.80px;width:197.5px;height:11.60px;background:#99c3e5"></div>
<div class="t" style="left:443.2px;top:469.20px;line-height:11.55px;color:#222">|-搞笑</div>
<div class="ab" style="left:436.5px;top:480.35px;width:197.5px;height:11.60px;background:#99c3e5"></div>
<div class="t" style="left:443.2px;top:480.75px;line-height:11.55px;color:#222">|-健康</div>
<div class="t" style="left:437.6px;top:492.30px;line-height:11.55px;color:#222">|-策划</div>
<div class="ab" style="left:436.5px;top:503.45px;width:197.5px;height:11.60px;background:#99c3e5"></div>
<div class="t" style="left:443.2px;top:503.85px;line-height:11.55px;color:#222">|-五花扒门</div>
<div class="ab" style="left:436.5px;top:515.00px;width:197.5px;height:11.60px;background:#99c3e5"></div>
<div class="t" style="left:443.2px;top:515.40px;line-height:11.55px;color:#222">|-综艺真人秀</div>
<div class="ab" style="left:436.5px;top:526.55px;width:197.5px;height:11.60px;background:#99c3e5"></div>
<div class="t" style="left:443.2px;top:526.95px;line-height:11.55px;color:#222">|-三六零距离</div>
<div class="ab" style="left:634px;top:400.2px;width:10.5px;height:137.5px;background:#f1f1f1"></div>
<div class="ab" style="left:635.5px;top:411.4px;width:7.5px;height:36.6px;background:#c1c1c1"></div>
<svg class="ab" style="left:636px;top:403px" width="6" height="4"><path d="M0.5 3.5 L3 0.5 L5.5 3.5Z" fill="#a3a3a3"/></svg>
<svg class="ab" style="left:636px;top:530.5px" width="6" height="4"><path d="M0.5 0.5 L3 3.5 L5.5 0.5Z" fill="#505050"/></svg>
<div class="ab c" style="left:519px;top:543px;width:42.5px;height:14.6px;background:#f2f2f2;border:1px solid #a6a6a6;border-radius:2px;color:#222;line-height:12.6px;padding-top:1px">开始刷新</div>
<div class="t c" style="left:440px;top:563.2px;width:200px;color:#777">多个用<span style="letter-spacing:0.25px">ctrl/shift</span>选择</div>
<div class="ab" style="left:934px;top:383px;width:343px;height:189px;border:1px solid #86bdd3;background:#fff"></div><div class="ab" style="left:935px;top:384px;width:341px;height:18px;background:#a9def4"></div><div class="ab" style="left:935px;top:385px;width:340px;height:17px;background:#4eb3df;border-bottom:1px solid #47a8d4"></div><div class="t c" style="left:934px;top:388.2px;width:343px;color:#fff;font-weight:bold;-webkit-text-stroke:0.15px #fff">刷新多专题页面</div>
<div class="ab" style="left:1021px;top:407.2px;width:169.2px;height:122.4px;border:1px solid #a0a0a0;background:#fff"></div>
<div class="ab" style="left:1178px;top:408.2px;width:11.2px;height:120.4px;background:#f1f1f1"></div>
<svg class="ab" style="left:1181px;top:411px" width="6" height="4"><path d="M0.5 3.5 L3 0.5 L5.5 3.5Z" fill="#a3a3a3"/></svg>
<svg class="ab" style="left:1181px;top:522px" width="6" height="4"><path d="M0.5 0.5 L3 3.5 L5.5 0.5Z" fill="#a3a3a3"/></svg>
<div class="ab" style="left:1061px;top:536.7px;width:9px;height:9px;border-radius:2px;background:#1a73e8"></div>
<svg class="ab" style="left:1061px;top:536.7px" width="9" height="9"><path d="M2 4.6 L3.8 6.4 L7.2 2.8" fill="none" stroke="#fff" stroke-width="1.4"/></svg>
<div class="t" style="left:1073.5px;top:537px;color:#222">含子分类</div>
<div class="ab c" style="left:1109px;top:535px;width:43.5px;height:15px;background:#f2f2f2;border:1px solid #a6a6a6;border-radius:2px;color:#222;line-height:13px;padding-top:1px">开始刷新</div>
<div class="t c" style="left:1005px;top:555.5px;width:200px;color:#777">多个用<span style="letter-spacing:0.25px">ctrl/shift</span>选择</div>
<div class="ab" style="left:149.4px;top:586px;width:1133.5px;height:20px;border:1px solid #86bdd3;border-top-color:#9fd6ee;background:#fff"></div>
<div class="ab" style="left:150.4px;top:587.5px;width:1131.5px;height:20px;background:#4eb3df"></div>
<div class="t c b0" style="left:149px;top:589px;width:1134px;color:#fff;font-weight:bold">按条件刷新信息内容页面</div>
<div class="ab" style="left:1288px;top:58px;width:12px;height:538px;background:#f1f1f1"></div>
<div class="ab" style="left:1290px;top:70px;width:8px;height:363px;background:#c1c1c1"></div>
<svg class="ab" style="left:1291.5px;top:63.5px" width="6" height="4"><path d="M0.5 3.5 L3 0.8 L5.5 3.5Z" fill="#b0b0b0"/></svg>
<svg class="ab" style="left:1291.5px;top:587.5px" width="6" height="4"><path d="M0.5 0.8 L3 3.5 L5.5 0.8Z" fill="#505050"/></svg>
</body></html>
